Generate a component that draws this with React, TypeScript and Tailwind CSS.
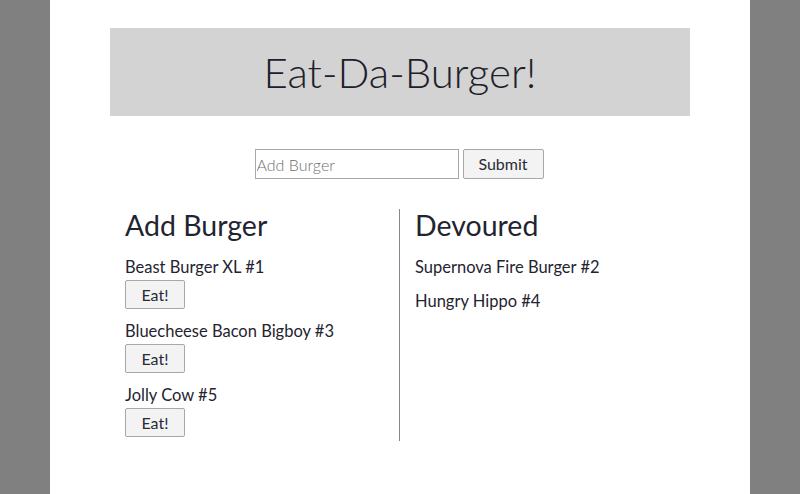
import React from 'react';

const waiting = ['Beast Burger XL #1', 'Bluecheese Bacon Bigboy #3', 'Jolly Cow #5'];
const devoured = ['Supernova Fire Burger #2', 'Hungry Hippo #4'];

function EatButton() {
  return (
    <button className="mt-px h-[29px] w-[60px] rounded-[2px] border border-[#a8a8a8] bg-[#f3f3f3] text-[16px] text-[#2a2a36]">
      Eat!
    </button>
  );
}

export default function App() {
  return (
    <div
      className="min-h-[494px] bg-[#808080] text-[#1f2430]"
      style={{ fontFamily: 'Lato, "Open Sans", sans-serif' }}
    >
      <div className="mx-auto min-h-[494px] w-[700px] bg-white px-[60px] pt-[28px]">
        <div className="flex h-[88px] items-center justify-center bg-[#d3d3d3]">
          <h1 className="text-[42px] font-light leading-none text-[#1d2029]">Eat-Da-Burger!</h1>
        </div>

        <form className="mt-[33px] flex justify-center gap-[4px] pr-[2px]" onSubmit={e => e.preventDefault()}>
          <input
            type="text"
            placeholder="Add Burger"
            className="h-[30px] w-[204px] border border-[#a9a9a9] px-[1px] text-[16px] font-light placeholder:text-[#6f6f6f]"
          />
          <button className="h-[30px] w-[81px] rounded-[2px] border border-[#a8a8a8] bg-[#f3f3f3] text-[16px] text-[#2a2a36]">
            Submit
          </button>
        </form>

        <div className="mt-[30px] flex">
          <div className="h-[232px] w-[290px] border-r border-[#888] px-[15px]">
            <h2 className="text-[28.5px] leading-[32px]">Add Burger</h2>
            <div className="mt-[14px] flex flex-col gap-[10px]">
              {waiting.map(name => (
                <div key={name}>
                  <div className="text-[16.5px] leading-[24px]">{name}</div>
                  <EatButton />
                </div>
              ))}
            </div>
          </div>
          <div className="w-[290px] px-[15px]">
            <h2 className="text-[28.5px] leading-[32px]">Devoured</h2>
            <div className="mt-[14px] flex flex-col gap-[10px]">
              {devoured.map(name => (
                <div key={name} className="text-[16.5px] leading-[24px]">
                  {name}
                </div>
              ))}
            </div>
          </div>
        </div>
      </div>
    </div>
  );
}
